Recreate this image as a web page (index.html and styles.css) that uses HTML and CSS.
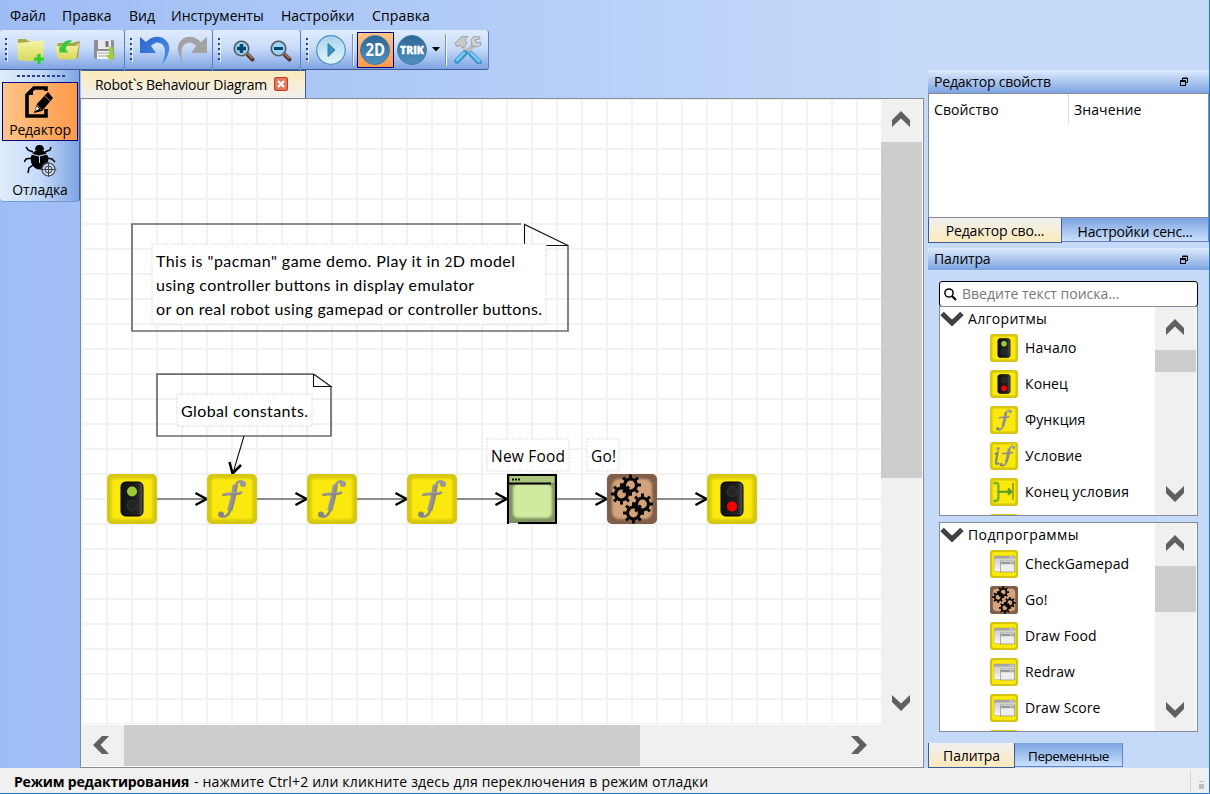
FILE: index.html
```html
<!DOCTYPE html>
<html lang="ru">
<head>
<meta charset="utf-8">
<title>Robot`s Behaviour Diagram</title>
<link rel="stylesheet" href="styles.css">
</head>
<body>
<svg class="defs" width="0" height="0">
  <defs>
    <linearGradient id="gGrey" x1="0" y1="0" x2="1" y2="1"><stop offset="0" stop-color="#b0b0b0"/><stop offset="1" stop-color="#747474"/></linearGradient>
    <linearGradient id="gFolder" x1="0" y1="0" x2="0" y2="1"><stop offset="0" stop-color="#f6f5a4"/><stop offset="1" stop-color="#d8d75c"/></linearGradient>
    <linearGradient id="gBlue" x1="0" y1="0" x2="1" y2="1"><stop offset="0" stop-color="#2b62cc"/><stop offset="1" stop-color="#4a96ea"/></linearGradient>
    <linearGradient id="gBall" x1="0" y1="0" x2="0" y2="1"><stop offset="0" stop-color="#2d6696"/><stop offset="1" stop-color="#4f92bd"/></linearGradient>
    <linearGradient id="gPlay" x1="0" y1="0" x2="0" y2="1"><stop offset="0" stop-color="#a9d3ee"/><stop offset="1" stop-color="#e2f7fd"/></linearGradient>
    <linearGradient id="gWin" x1="0" y1="0" x2="0" y2="1"><stop offset="0" stop-color="#c8c8c8"/><stop offset="1" stop-color="#f8f8f8"/></linearGradient>
    <linearGradient id="gLamp" x1="0" y1="0" x2="1" y2="0"><stop offset="0" stop-color="#101010"/><stop offset=".75" stop-color="#222"/><stop offset="1" stop-color="#555"/></linearGradient>
    <filter id="soft" x="-10%" y="-10%" width="120%" height="120%"><feGaussianBlur stdDeviation="1.3"/></filter>
    <clipPath id="tile"><rect width="50" height="50" rx="5"/></clipPath>
    <symbol id="yellow" viewBox="0 0 50 50">
      <g clip-path="url(#tile)"><rect width="50" height="50" fill="#d6c812"/><rect x="4.500" y="4.500" width="41" height="41" rx="3" fill="#fbe90a" filter="url(#soft)"/></g>
    </symbol>
    <symbol id="lampbox" viewBox="0 0 50 50">
      <rect x="14" y="8" width="22" height="34" rx="4.500" fill="url(#gLamp)" stroke="#000"/>
    </symbol>
    <symbol id="start" viewBox="0 0 50 50"><use href="#yellow"/><use href="#lampbox"/><circle cx="25" cy="17.500" r="5" fill="#9acd32"/><circle cx="25" cy="31.500" r="5" fill="#242424" stroke="#3c3c3c" stroke-width=".8"/></symbol>
    <symbol id="finish" viewBox="0 0 50 50"><use href="#yellow"/><use href="#lampbox"/><circle cx="25" cy="17.500" r="5" fill="#242424" stroke="#3c3c3c" stroke-width=".8"/><circle cx="25" cy="32.500" r="5" fill="#f00"/></symbol>
    <symbol id="fshape" viewBox="0 0 50 50">
      <g fill="none" stroke="url(#gGrey)" stroke-linecap="round">
        <path d="M37 9C33 5.500 29.300 8 28 14L23.500 34.500C22 41.500 17.500 44.500 13 41.500" stroke-width="2.600"/>
        <path d="M28.300 11L26 24L22.700 36.500" stroke-width="5.200" stroke-linecap="butt"/>
        <path d="M16.500 20.800C22 18.500 30 21.500 34 18.500" stroke-width="2.800"/>
      </g>
      <circle cx="36" cy="10" r="3" fill="#999"/><circle cx="14" cy="40.500" r="3" fill="#858585"/>
    </symbol>
    <symbol id="func" viewBox="0 0 50 50"><use href="#yellow"/><use href="#fshape"/></symbol>
    <symbol id="cond" viewBox="0 0 50 50"><use href="#yellow"/><use href="#fshape" x="6"/>
      <path d="M8.500 22L13.500 19L10.500 36Q10 42 16 37" fill="none" stroke="#858585" stroke-width="3.800"/><circle cx="14.500" cy="12" r="3" fill="#999"/></symbol>
    <symbol id="merge" viewBox="0 0 50 50"><use href="#yellow"/>
      <path d="M6 9H11Q15 9 15 14V35Q15 41 11 41H6" fill="none" stroke="#7eb02c" stroke-width="4.200"/><path d="M15 24.500H38M32 19L38 24.500L32 30" fill="none" stroke="#4f9a24" stroke-width="3.800"/><path d="M41 9V39" stroke="#a39c22" stroke-width="3.200"/></symbol>
    <symbol id="gear" viewBox="-11 -11 22 22">
      <circle r="6" fill="none" stroke="#070707" stroke-width="3.200"/>
      <g stroke="#070707" stroke-width="3"><path d="M0-7V-10.500M0 7V10.500M-7 0H-10.500M7 0H10.500M5-5L7.400-7.400M-5-5L-7.400-7.400M5 5L7.400 7.400M-5 5L-7.400 7.400"/></g>
    </symbol>
    <symbol id="go" viewBox="0 0 50 50">
      <g clip-path="url(#tile)"><rect width="50" height="50" fill="#805e48"/><rect x="5" y="5" width="40" height="40" rx="7" fill="#d3a47b" filter="url(#soft)"/>
      <use href="#gear" x="12.500" y="0" width="22" height="22"/><use href="#gear" x="3.500" y="9" width="22" height="22"/><use href="#gear" x="24.500" y="19" width="22" height="22"/><use href="#gear" x="15.500" y="28" width="22" height="22"/></g>
    </symbol>
    <symbol id="sub" viewBox="0 0 28 28">
      <rect width="28" height="28" rx="3" fill="#d2c40f"/><rect x="2" y="2" width="24" height="24" rx="2" fill="#fbe90a"/>
      <rect x="4" y="6" width="21" height="15.500" fill="url(#gWin)" stroke="#bdb97e" stroke-width=".6"/><rect x="4" y="6" width="21" height="2.500" fill="#a5a5a5"/>
      <rect x="10.500" y="11" width="14" height="11" fill="#ededed" stroke="#999" stroke-width=".8"/><rect x="11" y="12" width="13" height="2.200" fill="#999"/><path d="M20 7.200h4M20 13h3" stroke="#eee" stroke-dasharray="1 .7"/>
    </symbol>
    <symbol id="up" viewBox="0 0 18 16"><path d="M0 9L9 0L18 9V16L9 7.500L0 16Z" fill="#606060"/></symbol>
    <symbol id="float" viewBox="0 0 8 9"><path d="M2.500 3V1H7.500V5.500H5.500M2.500 1.500H7.500" fill="none" stroke="#000"/><rect x=".5" y="3.500" width="5" height="5" fill="none" stroke="#000"/><path d="M0 4.500H6" stroke="#000"/></symbol>
    <symbol id="lens" viewBox="0 0 24 24"><path d="M15.500 15.500L20.500 20.500" stroke="#50352b" stroke-width="4" stroke-linecap="round"/><path d="M16 15L20.500 19.500" stroke="#b57d4c" stroke-width="1.500"/><circle cx="9.500" cy="9.500" r="7.200" fill="#9cd3ee" stroke="#4a5560" stroke-width="1.600"/><circle cx="9.500" cy="9.500" r="8.100" fill="none" stroke="#a5abb2" stroke-width=".6"/></symbol>
  </defs>
</svg>
<div class="window">
  <nav class="menu"><span class="m1">Файл</span><span class="m2">Правка</span><span class="m3">Вид</span><span class="m4">Инструменты</span><span class="m5">Настройки</span><span class="m6">Справка</span></nav>

  <div class="toolbars">
    <div class="bar b1"><i class="grip"></i>
      <svg width="28" height="26" viewBox="0 0 28 26"><path d="M1 1H9L11 3H26V21H1Z" fill="#aaa746"/><path d="M0 5L12 4L14 3H27L26 22Q14 24 1 22Z" fill="url(#gFolder)"/><path d="M22 16V26M17 21H27" stroke="#30cf30" stroke-width="3.200"/></svg>
      <svg width="25" height="24" viewBox="0 0 25 24"><path d="M2 7L3 5H18L20 4L25 3L23 20L3 21Z" fill="#aaa746"/><path d="M0 8H21L24 5L21 21Q11 22 3 21Z" fill="url(#gFolder)"/><path d="M5 9V14H12L10 11Q11 6 16 3Q9 2 7 9Z" fill="#35c840" stroke="#35c840" stroke-width="1.200"/></svg>
      <svg width="22" height="22" viewBox="0 0 22 22"><path d="M0 1H19L20 2V20H1L0 19Z" fill="#8d9096"/><rect x="4" y="1" width="13" height="9" fill="#e9e9ec"/><path d="M13 2V8" stroke="#777" stroke-width="3"/><rect x="3" y="12" width="15" height="8" fill="#f5f5f5"/><path d="M4 14H17M4 17H14" stroke="#aaa"/><path d="M15 8H19V16H22L17 22L11 16H15Z" fill="#a2cf3d"/></svg>
    </div>
    <div class="bar b2"><i class="grip"></i>
      <svg width="30" height="28" viewBox="0 0 30 28"><path d="M0 1L6 6Q14-2 23 2Q32 8 28 18Q27 23 22 28Q28 13 22 8Q16 4 11 10L16 17H0Z" fill="url(#gBlue)"/></svg>
      <svg width="30" height="28" viewBox="0 0 30 28"><path d="M30 1L24 6Q16-2 7 2Q-2 8 2 18Q3 23 6 28Q2 13 8 8Q14 4 19 10L14 17H30Z" fill="#a3a3a3"/></svg>
    </div>
    <div class="bar b3"><i class="grip"></i>
      <svg width="24" height="24"><use href="#lens"/><path d="M9.500 5V14M5 9.500H14" stroke="#09446e" stroke-width="3.500"/></svg>
      <svg width="24" height="24"><use href="#lens"/><path d="M5 9.500H14" stroke="#09446e" stroke-width="3"/></svg>
    </div>
    <div class="bar b4"><i class="grip"></i>
      <svg width="30" height="30" viewBox="0 0 30 30"><circle cx="15" cy="15" r="14.300" fill="url(#gPlay)" stroke="#4b94be" stroke-width="1.200"/><path d="M12 8.500L19 15L12 21.500Z" fill="#3d91c1" stroke="#2d7dad"/></svg>
      <i class="sep s1"></i>
      <span class="on2d"><svg width="30" height="30" viewBox="0 0 30 30"><circle cx="15" cy="15" r="14.500" fill="url(#gBall)" stroke="#447da5"/><text x="5.500" y="21" textLength="19.500" lengthAdjust="spacingAndGlyphs" class="ball">2D</text></svg></span>
      <svg class="trik" width="30" height="30" viewBox="0 0 30 30"><circle cx="15" cy="15" r="14.500" fill="url(#gBall)" stroke="#447da5"/><text x="3" y="18.800" textLength="24" lengthAdjust="spacingAndGlyphs" class="ball small">TRIK</text></svg>
      <svg class="drop" width="8" height="5"><path d="M0 0H8L4 4.500Z"/></svg>
      <i class="sep s2"></i>
      <svg width="28" height="28" viewBox="0 0 28 28"><path d="M7 9L22 24" stroke="#c3c6c6" stroke-width="4"/><path d="M20 9L6 23" stroke="#b9bcbd" stroke-width="4"/><path d="M1 7L7 1L14 0L11 4L13 7L9 12L6 9L3 11Z" fill="#c9cac8" stroke="#8b8d8c" stroke-width=".7"/><path d="M20 0L17 4L18 10L23 11L27 9V6L23 7L21 4L26 3V1Z" fill="#d0d1cf" stroke="#8b8d8c" stroke-width=".7"/><path d="M17 18L25 26M11 17L3 25" stroke="#3d94cc" stroke-width="5.500" stroke-linecap="round"/><path d="M17 17L25 25M10 17L3 24" stroke="#79cdf7" stroke-width="2.500" stroke-linecap="round"/></svg>
    </div>
  </div>

  <div class="main">
    <aside class="modes">
      <i class="hgrip"></i>
      <button class="mode active"><svg width="30" height="33" viewBox="0 0 30 33"><path d="M21 5V2H9L2 9V30H21V23" fill="none" stroke="#000" stroke-width="3.600"/><path d="M0 9L8 1V9Z"/><path d="M23 6L28 12L17 25L9 27L12 18Z"/><path d="M12 20L14 23L10 25Z" fill="#fff"/><path d="M12.500 19L16 24M20 10L25 15" stroke="#ff9d55" stroke-width=".7"/></svg><span>Редактор</span></button>
      <button class="mode"><svg width="33" height="32" viewBox="0 0 33 32"><g fill="none" stroke="#000" stroke-width="1.500"><path d="M9 7L4 5L2 2M21 7L26 5L27 2M8 13L2 14L0 17M23 13L28 14L31 17M9 20L5 23L4 28"/></g><path d="M11 5Q11 0 15.500 0Q20 0 20 5Z"/><ellipse cx="15.500" cy="14.500" rx="8.800" ry="10"/><path d="M7 9L15 11L24 9M15.500 11V18" stroke="#c5d9f8" fill="none"/><circle cx="24.500" cy="24.500" r="7" fill="#c5d9f8"/><g fill="none" stroke="#444"><circle cx="24.500" cy="24.500" r="6.500" stroke-width="1.200"/><circle cx="24.500" cy="24.500" r="3.500"/><path d="M16.500 24.500H32.500M24.500 17V32"/></g></svg><span class="lower">Отладка</span></button>
    </aside>

    <section class="editor">
      <div class="filetab"><span>Robot`s Behaviour Diagram</span><svg width="14" height="14" viewBox="0 0 14 14"><rect x=".5" y=".5" width="13" height="13" rx="1.500" fill="#e17a62" stroke="#d4321c"/><path d="M4 4L10 10M10 4L4 10" stroke="#fff" stroke-width="2.300"/></svg></div>
      <div class="view">
        <svg class="scene" width="800" height="625" viewBox="81 99 800 625">
          <defs>
            <pattern id="grid" x="106" y="123" width="25" height="25" patternUnits="userSpaceOnUse"><path d="M0 1H25M1 0V25" stroke="#f2f2f2" stroke-width="2"/></pattern>
          </defs>
          <rect x="81" y="99" width="800" height="625" fill="url(#grid)"/>
          <g fill="none" stroke="#6c6c6c" stroke-width="1.700">
            <path d="M521 224H132V331H568V245"/>
            <path d="M313 374.200H157V436H331V386"/>
          </g>
          <g fill="none" stroke="#111" stroke-width="1.100">
            <path d="M524.500 245V224.500L568 245.500H546"/>
            <path d="M313.500 374V386.500H331L313.500 374M244 436L233 473"/>
          </g>
          <g fill="#fff" stroke="#c9c9c9" stroke-dasharray="1 1.500"><rect x="152" y="244" width="394" height="80"/><rect x="177" y="394" width="135" height="32"/><rect x="487" y="439" width="82" height="32"/><rect x="587" y="439" width="32" height="32"/></g>
          <path d="M157 499H207M257 499H307M357 499H407M457 499H507M557 499H607M657 499H707" stroke="#6c6c6c" stroke-width="1.700"/>
          <path d="M195.500 493L206.500 499L195.500 505M295.500 493L306.500 499L295.500 505M395.500 493L406.500 499L395.500 505M495.500 493L506.500 499L495.500 505M595.500 493L606.500 499L595.500 505M695.500 493L706.500 499L695.500 505M229.500 462L232.500 473.500L241 465" fill="none" stroke="#000" stroke-width="2.500"/>
          <g class="note">
            <text x="156" y="267" textLength="359">This is "pacman" game demo. Play it in <tspan class="osf">2</tspan>D model</text>
            <text x="156" y="291" textLength="318">using controller buttons in display emulator</text>
            <text x="156" y="315" textLength="386">or on real robot using gamepad or controller buttons.</text>
            <text x="181" y="417" textLength="127">Global constants.</text>
            <text x="491" y="462" textLength="74" class="seg">New Food</text>
            <text x="591" y="462" textLength="25" class="seg">Go!</text>
          </g>
          <use href="#start" x="107" y="474" width="50" height="50"/>
          <use href="#func" x="207" y="474" width="50" height="50"/>
          <use href="#func" x="307" y="474" width="50" height="50"/>
          <use href="#func" x="407" y="474" width="50" height="50"/>
          <g><rect x="508" y="475" width="48" height="48" fill="#7f9160"/><rect x="513" y="484" width="39" height="34" rx="5" fill="#d0eaa0" filter="url(#soft)"/><rect x="510" y="476" width="44" height="7" fill="#a9c57e"/><path d="M508 524V475H556V523H518" fill="none" stroke="#000" stroke-width="2"/><path d="M509 483.500H551" stroke="#000" stroke-width="1.800"/><path d="M512 479.500H520" stroke="#000" stroke-width="1.800" stroke-dasharray="1.800 1.200"/></g>
          <use href="#go" x="607" y="474" width="50" height="50"/>
          <use href="#finish" x="707" y="474" width="50" height="50"/>
        </svg>
        <div class="vbar"><svg class="a-up" width="18" height="16"><use href="#up"/></svg><div class="vthumb"></div><svg class="a-down" width="18" height="16"><use href="#up"/></svg></div>
        <div class="hbar"><svg width="16" height="18" viewBox="0 0 16 18"><path d="M9 0H16L7.500 9L16 18H9L0 9Z" fill="#606060"/></svg><div class="hthumb"></div><svg width="16" height="18" viewBox="0 0 16 18"><path d="M7 0H0L8.500 9L0 18H7L16 9Z" fill="#606060"/></svg></div>
      </div>
    </section>

    <aside class="docks">
      <header class="dockhead"><span class="d1">Редактор свойств</span><svg width="8" height="9"><use href="#float"/></svg></header>
      <div class="props"><span>Свойство</span><span>Значение</span></div>
      <div class="tabs top"><span class="tab sel">Редактор сво...</span><span class="tab">Настройки сенс...</span></div>
      <header class="dockhead second"><span class="d2">Палитра</span><svg width="8" height="9"><use href="#float"/></svg></header>
      <div class="palette">
        <div class="search"><svg width="13" height="13" viewBox="0 0 13 13"><circle cx="5" cy="5" r="4.100" fill="none" stroke="#000" stroke-width="1.500"/><path d="M8 8L12 12" stroke="#000" stroke-width="2.200"/></svg><span>Введите текст поиска...</span></div>
        <div class="list">
          <div class="items">
            <div class="group"><svg width="24" height="15" viewBox="0 0 24 15"><path d="M2 2.500L12 12L22 2.500" fill="none" stroke="#404244" stroke-width="5"/></svg><span class="g1">Алгоритмы</span></div>
            <div class="item"><svg><use href="#start"/></svg><span class="i1">Начало</span></div>
            <div class="item"><svg><use href="#finish"/></svg><span class="i2">Конец</span></div>
            <div class="item"><svg><use href="#func"/></svg><span class="i3">Функция</span></div>
            <div class="item"><svg><use href="#cond"/></svg><span class="i4">Условие</span></div>
            <div class="item"><svg><use href="#merge"/></svg><span class="i5">Конец условия</span></div>
            <div class="item"><svg><use href="#yellow"/></svg></div>
          </div>
          <div class="sbar"><svg width="18" height="16"><use href="#up"/></svg><div class="thumb t1"></div><svg class="flip" width="18" height="16"><use href="#up"/></svg></div>
        </div>
        <div class="list two">
          <div class="items">
            <div class="group"><svg width="24" height="15" viewBox="0 0 24 15"><path d="M2 2.500L12 12L22 2.500" fill="none" stroke="#404244" stroke-width="5"/></svg><span class="g2">Подпрограммы</span></div>
            <div class="item"><svg><use href="#sub"/></svg><span class="i6">CheckGamepad</span></div>
            <div class="item"><svg><use href="#go"/></svg><span class="i7">Go!</span></div>
            <div class="item"><svg><use href="#sub"/></svg><span class="i8">Draw Food</span></div>
            <div class="item"><svg><use href="#sub"/></svg><span class="i9">Redraw</span></div>
            <div class="item"><svg><use href="#sub"/></svg><span class="i10">Draw Score</span></div>
            <div class="item"><svg><use href="#yellow"/></svg></div>
          </div>
          <div class="sbar"><svg width="18" height="16"><use href="#up"/></svg><div class="thumb t2"></div><svg class="flip" width="18" height="16"><use href="#up"/></svg></div>
        </div>
      </div>
      <div class="tabs bottom"><span class="tab sel">Палитра</span><span class="tab">Переменные</span></div>
    </aside>
  </div>
  <footer class="status"><b>Режим редактирования</b><span>- нажмите Ctrl+2 или кликните здесь для переключения в режим отладки</span><i class="size"></i></footer>
</div>
</body>
</html>
```

FILE: styles.css
```css
* { box-sizing: border-box; }
body { margin: 0; font: 14px/20px "Open Sans", "Noto Sans", sans-serif; color: #000; }
svg { display: block; flex: none; }
span, b { white-space: nowrap; }
.defs { position: absolute; }
.window {
  width: 1210px; height: 794px; overflow: hidden;
  border-right: 1px solid #1979ca; border-bottom: 1px solid #1979ca;
  background: linear-gradient(90deg, #9ebdf5, #c5daf9 75%);
  display: flex; flex-direction: column;
}

/* menu */
.menu { height: 30px; flex: none; display: flex; padding: 6px 0 0 10px; }
.menu span { flex: none; }
.m1 { width: 52px; } .m2 { width: 67px; } .m3 { width: 42px; }
.m4 { width: 110px; } .m5 { width: 91px; } .m6 { letter-spacing: .15px; }

/* toolbars */
.toolbars { height: 40px; flex: none; display: flex; }
.bar {
  height: 40px; display: flex; align-items: center; flex: none;
  background: linear-gradient(#e0ecfe, #c9dcfa 45%, #7fa4e2);
  border-bottom: 1px solid #3e5a98; border-right: 1px solid #5c7fc4;
  border-radius: 3px 3px 3px 0; padding: 0 0 0 5px;
}
.grip { width: 3px; height: 24px; background: repeating-linear-gradient(#27418a 0 2px, transparent 2px 5px); border-right: 1px solid #e8f1ff; }
.b1 { width: 125px; } .b2 { width: 88px; } .b3 { width: 88px; } .b4 { width: 188px; }
.b1 svg:nth-of-type(1) { margin: 2px 0 0 9px; }
.b1 svg:nth-of-type(2) { margin-left: 10px; }
.b1 svg:nth-of-type(3) { margin-left: 14px; }
.b2 svg:nth-of-type(1) { margin-left: 7px; }
.b2 svg:nth-of-type(2) { margin-left: 7px; }
.b3 svg:nth-of-type(1) { margin: 2px 0 0 11px; }
.b3 svg:nth-of-type(2) { margin: 2px 0 0 13px; }
.b4 > svg:nth-of-type(1) { margin-left: 7px; }
.sep { width: 2px; height: 32px; background: #6c91d5; border-right: 1px solid #f3f8ff; }
.s1 { margin: 0 3px 0 6px; }
.s2 { margin: 0 7px 0 5px; }
.on2d { width: 37px; height: 36px; border: 1px solid #000080; background: linear-gradient(#fec587, #ff9a4c); display: flex; align-items: center; padding-left: 2px; }
.trik { margin: 0 5px 0 3px; }
.ball { font: 700 17px "Open Sans", sans-serif; fill: #fff; }
.small { font-size: 10px; font-weight: 800; stroke: #fff; stroke-width: .3px; }

/* main area */
.main { height: 698px; flex: none; display: flex; }
.modes {
  width: 80px; height: 132px; flex: none; display: flex; flex-direction: column; align-items: flex-start;
  padding: 5px 0 0 2px; border-radius: 0 0 4px 4px; border-right: 1px solid #3e5a98; border-bottom: 1px solid #7697d5;
  background: linear-gradient(90deg, #e0ecfe, #c5daf9 50%, #7fa4e2);
}
.hgrip { width: 48px; height: 2px; margin: 0 0 5px 15px; background: repeating-linear-gradient(90deg, #27418a 0 3px, transparent 3px 5px); }
.mode { width: 76px; height: 59px; padding: 0; border: 1px solid transparent; background: none; font: inherit; color: #000; display: flex; flex-direction: column; align-items: center; }
.mode svg { margin-top: 3px; }
.mode span { line-height: 18px; margin-top: 2px; letter-spacing: -.15px; }
.mode .lower { margin-top: 4px; }
.mode.active { border-color: #000080; background: linear-gradient(90deg, #fec587, #ff9a4c); }

.editor { width: 844px; flex: none; }
.filetab { width: 225px; height: 28px; margin-left: 1px; padding-left: 14px; display: flex; align-items: center; gap: 7px; border-right: 1px solid #3e5a98; border-top: 1px solid #3e5a98; background: linear-gradient(#fdeabb, #f0f0f0); letter-spacing: -.28px; }
.filetab svg { margin-top: -1px; }
.view { height: 670px; border: 1px solid #868a95; background: #fff; display: grid; grid-template: 626px 42px / 800px 42px; }
.note { font: 16px Lato, sans-serif; fill: #000; }
.seg { font: 15.5px "Open Sans", sans-serif; }
.osf { font-size: 13px; }
.vbar { width: 41px; height: 667px; grid-row: 1 / 3; grid-column: 2; background: #f0f0f0; display: flex; flex-direction: column; align-items: flex-start; padding-top: 12px; }
.vbar svg, .sbar svg { margin-left: 11px; }
.vthumb { width: 41px; height: 336px; margin: 15px 0 217px; background: #cdcdcd; }
.a-down, .flip { transform: scaleY(-1); }
.hbar { height: 41px; background: #f0f0f0; display: flex; align-items: center; padding-left: 12px; }
.hbar svg { margin-top: -2px; }
.hthumb { width: 516px; height: 41px; margin: 0 211px 0 15px; background: #cdcdcd; }

/* docks */
.docks { width: 285px; padding-left: 4px; flex: none; }
.dockhead { height: 23px; padding: 0 21px 0 6px; display: flex; align-items: center; justify-content: space-between; background: linear-gradient(#dfebfe, #7ca3e1); }
.dockhead span { letter-spacing: -.2px; }
.props { height: 125px; display: flex; border: 1px solid #868a95; background: #fff; }
.props span { height: 30px; padding: 6px 0 0 5px; letter-spacing: .1px; }
.props span:first-child { width: 140px; border-right: 1px solid #ddd; }
.tabs { display: flex; align-items: flex-start; }
.tab { height: 24px; line-height: 27px; text-align: center; background: linear-gradient(#7ca3e1, #c9dffc); border: solid #6384c9; border-width: 0 1px 1px 0; letter-spacing: -.2px; }
.tab.sel { height: 25px; line-height: 25px; border: solid #3e5a98; border-width: 0 1px 1px 1px; background: linear-gradient(#f0f0f0, #fdeabb); letter-spacing: -.15px; }
.top .sel { width: 134px; } .top .tab:last-child { width: 147px; }
.second { height: 22px; margin-top: 5px; }
.palette { height: 473px; padding: 11px 11px 0; }
.search { height: 26px; border: 1px solid #000; border-radius: 3px; background: #fff; padding-left: 4px; display: flex; align-items: center; gap: 5px; color: #777; }
.list { height: 210px; border: 1px solid #868a95; background: #fff; display: flex; overflow: hidden; margin-top: -1px; }
.two { margin-top: 6px; }
.items { width: 215px; height: 208px; overflow: hidden; }
.group { height: 23px; display: flex; align-items: center; gap: 4px; }
.g1 { letter-spacing: .3px; }
.g2 { letter-spacing: .4px; }
.item { height: 36px; display: flex; align-items: center; gap: 7px; padding-left: 50px; letter-spacing: .1px; }
.i5 { letter-spacing: .25px; }
.item svg { width: 28px; height: 28px; }
.sbar { width: 41px; background: #f0f0f0; display: flex; flex-direction: column; align-items: flex-start; padding-top: 12px; }
.thumb { width: 41px; background: #cdcdcd; }
.t1 { height: 22px; margin: 15px 0 114px; }
.t2 { height: 46px; margin: 15px 0 90px; }
.bottom .sel { width: 87px; }
.bottom .tab:last-child { width: 108px; font-size: 13.5px; letter-spacing: -.5px; }

/* status bar */
.status { height: 25px; flex: none; display: flex; align-items: center; padding: 3px 0 0 14px; gap: 5px; background: #f0f0f0; }
.status b { letter-spacing: -.18px; }
.status span { letter-spacing: .18px; }
.size { width: 18px; height: 21px; margin: 0 1px 2px auto; border-left: 1px solid #d5d5d5; display: flex; align-items: flex-end; padding: 0 0 3px 8px; }
.size::after { content: ""; width: 5px; height: 8px; background: linear-gradient(#bfbfbf 0 1px, transparent 1px 3px, #bfbfbf 3px); }
```
